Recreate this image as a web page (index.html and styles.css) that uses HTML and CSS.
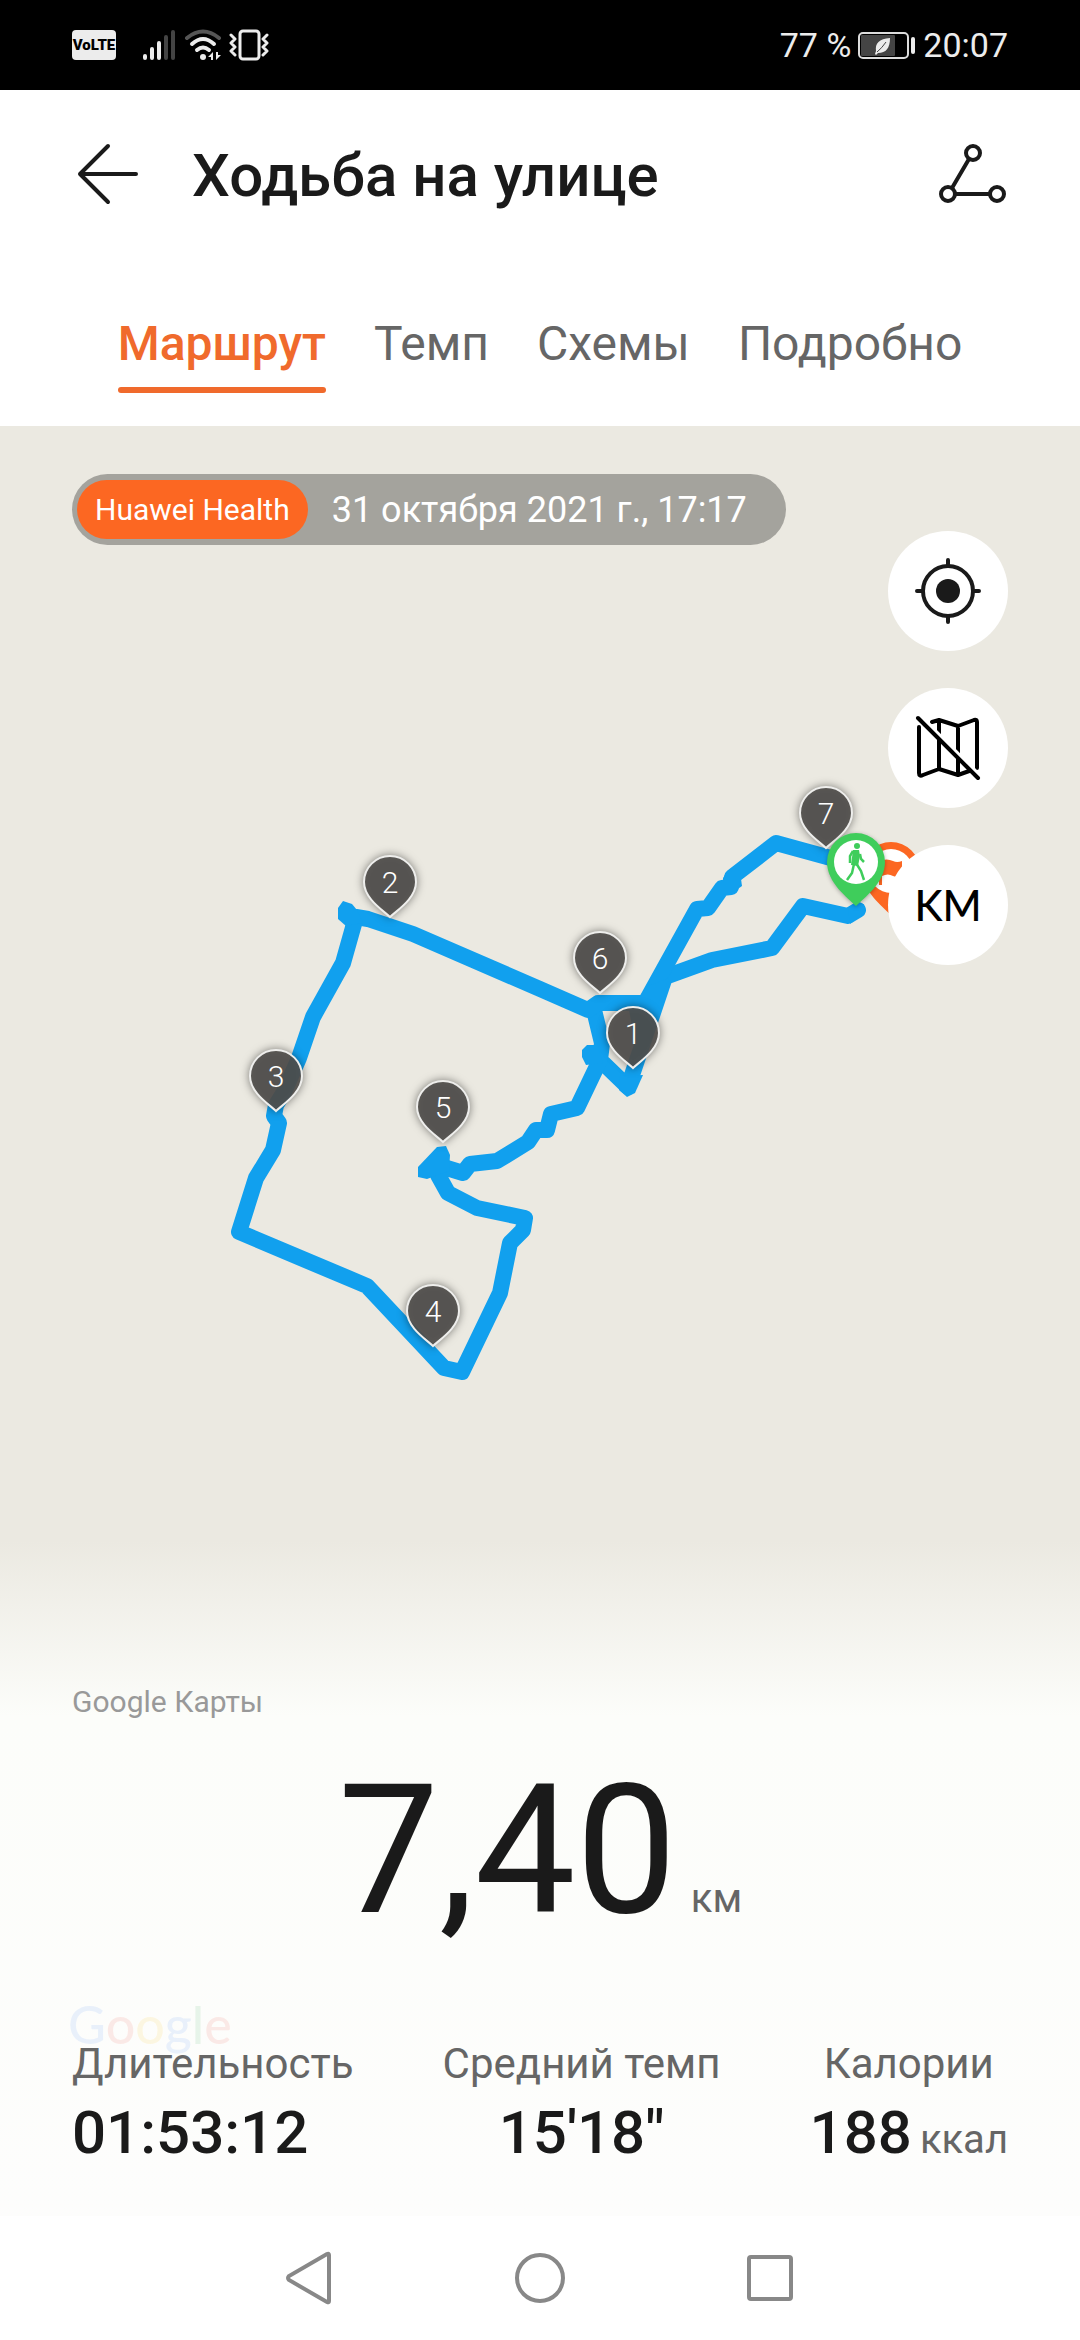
FILE: index.html
```
<!DOCTYPE html>
<html lang="ru">
<head>
  <meta charset="UTF-8" />
  <meta name="viewport" content="width=device-width, initial-scale=1.0"/>
  <title>Ходьба на улице</title>
  <link rel="stylesheet" href="styles.css">
</head>
<body>
  <div class="status-bar">
    <div class="status-left">
      <span class="volte">VoLTE</span>
      <svg class="signal" width="34" height="32" viewBox="0 0 34 32" fill="none" stroke="#ececec" stroke-width="4" stroke-linecap="round">
        <path d="M3 27v2M10 20v9M17 14v15"/>
        <path d="M24 8v21M31 3v26" stroke="#444"/>
      </svg>
      <svg width="38" height="32" viewBox="0 0 38 32" fill="none" stroke="#ececec" stroke-width="4" stroke-linecap="round">
        <path d="M3 9Q19-4 35 9" stroke="#555"/>
        <path d="M8 15Q19 5 30 15M13 21Q19 16 25 21"/>
        <circle cx="19" cy="28" r="3" fill="#ececec" stroke="none"/>
        <path d="M29 23v8h-2v-3h-3zM32 23v8l5-5h-3v-3z" fill="#ececec" stroke="none"/>
      </svg>
      <svg class="vibrate" width="42" height="34" viewBox="0 0 42 34" fill="none" stroke="#ececec" stroke-width="3" stroke-linecap="round" stroke-linejoin="round">
        <rect x="12" y="3" width="19" height="28" rx="3"/>
        <path d="M3 7l4 4-4 4 4 4-4 4 4 4M39 7l-4 4 4 4-4 4 4 4-4 4"/>
      </svg>
    </div>
    <div class="status-right">
      <span>77 %</span>
      <svg width="60" height="30" viewBox="0 0 60 30">
        <rect x="2" y="3" width="49" height="25" rx="4" fill="none" stroke="#dcdcdc" stroke-width="2"/>
        <rect x="4" y="5" width="34" height="21" rx="1" fill="#444"/>
        <path d="M33 8c-11 1-15 5-14 13l-1 3 1 1 2-2c8 0 12-5 12-15z" fill="#ececec"/>
        <path d="M20 22q5-4 9-10" fill="none" stroke="#444"/>
        <rect x="54" y="7" width="4" height="17" rx="2" fill="#ececec"/>
      </svg>
      <span>20:07</span>
    </div>
  </div>

  <header>
    <button class="icon-btn" aria-label="Назад">
      <svg width="72" height="68" viewBox="0 0 72 68" fill="none" stroke="#1a1a1a" stroke-width="4" stroke-linecap="round" stroke-linejoin="round">
        <path d="M64 34H8M36 6L8 34l28 28"/>
      </svg>
    </button>
    <h1>Ходьба на улице</h1>
    <button class="icon-btn share-btn" aria-label="Поделиться">
      <svg width="72" height="68" viewBox="0 0 72 68" fill="none" stroke="#1a1a1a" stroke-width="4">
        <circle cx="37" cy="13" r="7"/>
        <circle cx="12" cy="54" r="7"/>
        <circle cx="61" cy="54" r="7"/>
        <path d="M33 19L16 48M19 54h35"/>
      </svg>
    </button>
  </header>

  <nav class="tabs">
    <a href="#" class="active">Маршрут</a>
    <a href="#">Темп</a>
    <a href="#">Схемы</a>
    <a href="#">Подробно</a>
  </nav>

  <main class="map">
    <svg class="route" viewBox="0 426 1080 1114">
      <defs>
        <path id="pin" d="M0 0C-6-6-26-18-26-35A26 26 0 0 1 26-35C26-18 6-6 0 0z"/>
      </defs>

      <!-- track -->
      <g class="track">
        <path d="M858 910L848 916 803 906 772 948 712 960 665 977 628 1087 600 1060 602 1043 594 1010"/>
        <path d="M850 863L827 857 776 843 732 877 731 887 722 888 708 908 697 909 645 1003 598 1003 588 1010 540 989 413 934 368 919 356 917 343 963 313 1017 299 1058 284 1092 276 1105 274 1116 279 1123 273 1150 256 1178 239 1232 367 1286 444 1368 462 1372 500 1293 510 1243 523 1230 525 1218 477 1208 448 1193 438 1175 437 1165 463 1173 470 1164 497 1161 528 1142 536 1130 547 1130 551 1114 577 1108 600 1060"/>
        <path class="knot" d="M338 908l5-7 9 3 5 6 6 13-17 3-8-7z"/>
        <path class="knot" d="M418 1167l19-20 9-1 4 9-1 16-22 8-9-2z"/>
        <path class="knot" d="M582 1050l5-5h10l6 18-17 2-4-8z"/>
        <path class="knot" d="M620 1076l-1 14 8 7 8-4 8-18z"/>
        <path class="knot" d="M723 878l4-6h13l2 14-7 5-12 3z"/>
        <path class="knot" d="M848 908l16-4 1 8-15 12z"/>
        <path class="knot" d="M640 996l8-10 21-8-32 76-8-44z"/>
      </g>

      <!-- kilometre marks -->
      <g class="marks">
        <g transform="translate(826 848)"><use href="#pin"/><text y="-24">7</text></g>
        <g transform="translate(600 993)"><use href="#pin"/><text y="-24">6</text></g>
        <g transform="translate(390 917)"><use href="#pin"/><text y="-24">2</text></g>
        <g transform="translate(633 1068)"><use href="#pin"/><text y="-24">1</text></g>
        <g transform="translate(276 1111)"><use href="#pin"/><text y="-24">3</text></g>
        <g transform="translate(443 1142)"><use href="#pin"/><text y="-24">5</text></g>
        <g transform="translate(433 1346)"><use href="#pin"/><text y="-24">4</text></g>
      </g>

      <!-- finish and start -->
      <g transform="translate(891 915)">
        <path d="M0 0C-8-8-29-24-29-44A29 29 0 0 1 29-44C29-24 8-8 0 0z" fill="#fc6722"/>
        <circle cy="-44" r="22" fill="#fff"/>
        <path d="M-12-54v24h3v-9q6-3 11 0 5 2 9 0v-15q-5 2-9 0-6-3-14 0z" fill="#fc6722"/>
      </g>
      <g class="start" transform="translate(856 906)">
        <path d="M0 0C-8-8-29-23-29-44A29 29 0 0 1 29-44C29-23 8-8 0 0z" fill="#3fcd5b"/>
        <circle cy="-44" r="22" fill="#fff"/>
        <circle cx="1" cy="-60" r="3" fill="#3fcd5b"/>
        <path d="M-3-56h6l1 6-2 10-7-1z" fill="#3fcd5b"/>
        <path d="M-3-55l-3 5v7M4-52l1 5 3 3M-2-42l-2 9-5 7M0-43l5 8 3 9" fill="none" stroke="#3fcd5b" stroke-width="2.5"/>
      </g>
    </svg>

    <div class="map-tools">
      <div class="badge">
        <span class="badge-app">Huawei Health</span>
        <span class="badge-date">31 октября 2021 г., 17:17</span>
      </div>
      <div class="map-buttons">
        <button aria-label="Моё местоположение">
          <svg width="72" height="72" viewBox="0 0 72 72" fill="none" stroke="#1a1a1a" stroke-width="4" stroke-linecap="round">
            <circle cx="36" cy="36" r="25"/>
            <circle cx="36" cy="36" r="12" fill="#1a1a1a" stroke="none"/>
            <path d="M36 5v6M36 61v6M5 36h6M61 36h6"/>
          </svg>
        </button>
        <button aria-label="Скрыть карту">
          <svg width="72" height="72" viewBox="0 0 72 72" fill="none" stroke="#000" stroke-width="4" stroke-linecap="round" stroke-linejoin="round">
            <path d="M7 15v46q0 4 4 2l16-6 19 6 14-5M20 10l7-2 19 6 16-6q3-1 3 2v46M27 9v48M46 14v48"/>
            <path d="M11 7l56 56" stroke="#fff"/>
            <path d="M6 6l60 60"/>
          </svg>
        </button>
        <button class="km-btn">KM</button>
      </div>
    </div>

    <section class="summary">
      <p class="map-source">Google Карты</p>
      <p class="distance">7,40<span>км</span></p>
      <div class="stats">
        <div class="google-mark"><span>G</span><span>o</span><span>o</span><span>g</span><span>l</span><span>e</span></div>
        <div class="stat stat-left">
          <p class="stat-label">Длительность</p>
          <p class="stat-value">01:53:12</p>
        </div>
        <div class="stat">
          <p class="stat-label">Средний темп</p>
          <p class="stat-value">15'18"</p>
        </div>
        <div class="stat">
          <p class="stat-label">Калории</p>
          <p class="stat-value">188<span>ккал</span></p>
        </div>
      </div>
    </section>
  </main>

  <footer class="system-nav">
    <button aria-label="Назад">
      <svg width="56" height="56" viewBox="0 0 56 56"><path d="M47 5v46q0 2-2 1L7 30q-2-2 0-4L45 4q2-1 2 1z"/></svg>
    </button>
    <button aria-label="Домой">
      <svg width="56" height="56" viewBox="0 0 56 56"><circle cx="28" cy="28" r="23"/></svg>
    </button>
    <button aria-label="Недавние">
      <svg width="56" height="56" viewBox="0 0 56 56"><rect x="7" y="7" width="42" height="42" rx="2"/></svg>
    </button>
  </footer>
</body>
</html>
```
FILE: styles.css
```
* { box-sizing: border-box; }
body {
  margin: 0;
  min-height: 100vh;
  display: flex;
  flex-direction: column;
  font-family: Roboto, "Noto Sans", sans-serif;
  background-color: #fff;
  color: #1a1a1a;
}
h1, p {
  margin: 0;
}
button {
  background: none;
  border: none;
  padding: 0;
  cursor: pointer;
  color: inherit;
  font-family: inherit;
}
svg {
  display: block;
}
.status-bar {
  background: #000;
  color: #ececec;
  height: 90px;
  padding: 0 72px;
  display: flex;
  justify-content: space-between;
  align-items: center;
  font-size: 34px;
  line-height: 40px;
}
.status-left,
.status-right {
  display: flex;
  align-items: center;
}
.status-right {
  gap: 6px;
}
.volte {
  background: #ececec;
  color: #000;
  width: 44px;
  height: 30px;
  border-radius: 4px;
  font-size: 15px;
  line-height: 30px;
  font-weight: 900;
  text-align: center;
}
.signal {
  margin-left: 26px;
  margin-right: 8px;
}
.vibrate {
  margin-left: 6px;
}
header {
  padding: 50px 72px;
  display: flex;
  align-items: flex-start;
  gap: 48px;
}
header h1 {
  flex: 1;
  font-size: 60px;
  line-height: 72px;
  font-weight: 500;
}
.tabs {
  padding: 54px 72px 33px;
  display: flex;
  justify-content: center;
  gap: 48px;
}
.tabs a {
  color: #666;
  text-decoration: none;
  font-size: 48px;
  line-height: 56px;
}
.tabs .active {
  color: #f06a2c;
  font-weight: 500;
}
.tabs .active::after {
  content: "";
  display: block;
  height: 6px;
  margin-top: 15px;
  border-radius: 3px;
  background: #f06a2c;
}
.map {
  position: relative;
  flex: 1;
  display: flex;
  flex-direction: column;
  background: #ebe9e1;
}
.route {
  position: absolute;
  top: 0;
  left: 0;
  width: 100%;
}
.track {
  fill: none;
  stroke: #11a0ee;
  stroke-width: 16px;
  stroke-linejoin: round;
  stroke-linecap: round;
}
.track .knot {
  fill: #11a0ee;
  stroke: none;
}
.marks use {
  fill: #504e4b;
  fill-opacity: 0.9;
  stroke: #eeeeec;
  stroke-width: 2px;
  filter: drop-shadow(0 0 4px rgba(0, 0, 0, 0.5));
}
.marks text {
  fill: #fff;
  font-size: 30px;
  font-weight: 300;
  text-anchor: middle;
}
.start {
  filter: drop-shadow(0 1px 2px rgba(0, 0, 0, 0.3));
}
.map-tools {
  position: relative;
  padding: 48px 72px 0;
  display: flex;
  justify-content: space-between;
  align-items: flex-start;
}
.badge {
  background: #a4a39d;
  color: #fff;
  height: 71px;
  padding: 6px 39px 6px 5px;
  border-radius: 36px;
  display: flex;
  align-items: center;
  gap: 24px;
}
.badge-app {
  background: #fc6722;
  height: 59px;
  line-height: 59px;
  padding: 0 18px;
  border-radius: 30px;
  font-size: 30px;
}
.badge-date {
  font-size: 36px;
}
.map-buttons {
  display: flex;
  flex-direction: column;
  gap: 37px;
  padding-top: 57px;
}
.map-buttons button {
  width: 120px;
  height: 120px;
  border-radius: 50%;
  background: #fff;
  display: flex;
  align-items: center;
  justify-content: center;
}
.map-buttons .km-btn {
  color: #000;
  font-family: Lato, sans-serif;
  font-size: 42px;
  font-weight: 500;
}
.summary {
  position: relative;
  margin-top: auto;
  padding: 141px 72px 49px;
  background: linear-gradient(#ebe9e1, #fcfdfa 175px, #fdfdfc);
}
.map-source {
  color: #999;
  font-size: 30px;
  line-height: 40px;
}
.distance {
  margin-top: 39px;
  font-size: 180px;
  line-height: 180px;
  text-align: center;
}
.distance span {
  margin-left: 14px;
  font-size: 40px;
  line-height: 40px;
  color: #666;
}
.stats {
  position: relative;
  margin-top: 99px;
  display: flex;
  justify-content: space-between;
}
.stat {
  position: relative;
  text-align: center;
}
.stat-left {
  text-align: left;
}
.stat-label {
  color: #666;
  font-size: 42px;
  line-height: 48px;
}
.stat-value {
  margin-top: 11px;
  font-size: 60px;
  line-height: 68px;
  font-weight: 500;
}
.stat-value span {
  margin-left: 8px;
  font-size: 40px;
  line-height: 40px;
  font-weight: 400;
  color: #666;
}
/* faded logo that lies under the stats */
.google-mark {
  position: absolute;
  top: -42px;
  left: -4px;
  font-family: Lato, sans-serif;
  font-size: 52px;
  line-height: 52px;
  font-weight: 500;
  opacity: 0.1;
  color: #4285f4;
}
.google-mark span:nth-child(2),
.google-mark span:nth-child(6) {
  color: #ea4335;
}
.google-mark span:nth-child(3) {
  color: #fbbc05;
}
.google-mark span:nth-child(5) {
  color: #34a853;
}
.system-nav {
  height: 124px;
  display: flex;
  justify-content: center;
  align-items: center;
  gap: 174px;
  background: #fff;
}
.system-nav svg {
  fill: none;
  stroke: #888;
  stroke-width: 4px;
}
```
